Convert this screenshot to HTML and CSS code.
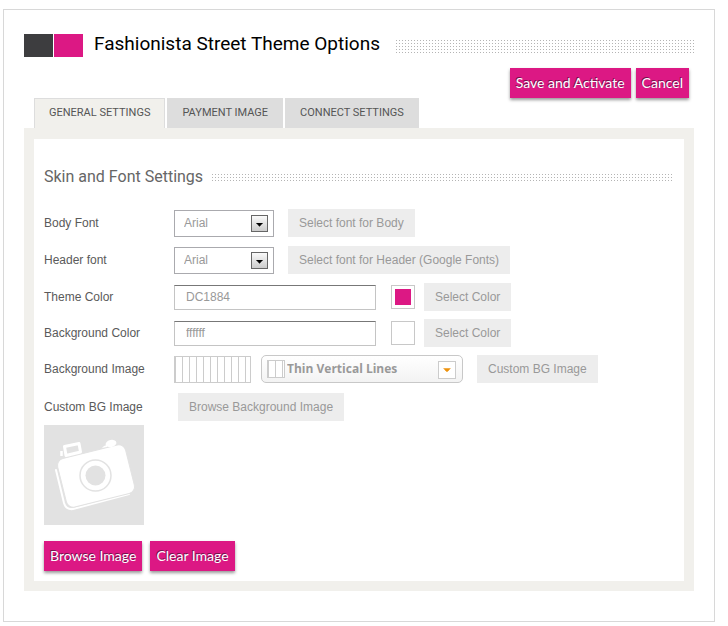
FILE: index.html
```html
<!DOCTYPE html>
<html lang="en">
<head>
<meta charset="utf-8">
<meta name="viewport" content="width=device-width, initial-scale=1">
<title>Fashionista Street Theme Options</title>
<link rel="stylesheet" href="styles.css">
</head>
<body>
<main class="card">
  <header class="title-bar">
    <span class="logo" aria-hidden="true"><span class="logo-dark"></span><span class="logo-pink"></span></span>
    <h1 class="title">Fashionista Street Theme Options</h1>
    <span class="dots dots-large"></span>
  </header>
  <div class="actions">
    <button class="primary" type="button">Save and Activate</button>
    <button class="primary" type="button">Cancel</button>
  </div>
  <nav class="tabs">
    <a class="tab tab-active" href="#general">General Settings</a>
    <a class="tab" href="#payment">Payment Image</a>
    <a class="tab" href="#connect">Connect Settings</a>
  </nav>
  <form class="panel" id="general">
    <div class="section-head">
      <h2 class="section-title">Skin and Font Settings</h2>
      <span class="dots dots-small"></span>
    </div>

    <div class="row row-font">
      <label class="label" for="body-font">Body Font</label>
      <span class="font-select">
        <select id="body-font"><option>Arial</option><option>Verdana</option></select>
        <svg class="select-arrow" viewBox="0 0 17 17" aria-hidden="true"><path d="M5 8h7v1h-1v1h-1v1h-1v1H8v-1H7v-1H6V9H5z"/></svg>
      </span>
      <button class="secondary" type="button">Select font for Body</button>
    </div>
    <div class="row row-font">
      <label class="label" for="header-font">Header font</label>
      <span class="font-select">
        <select id="header-font"><option>Arial</option><option>Verdana</option></select>
        <svg class="select-arrow" viewBox="0 0 17 17" aria-hidden="true"><path d="M5 8h7v1h-1v1h-1v1h-1v1H8v-1H7v-1H6V9H5z"/></svg>
      </span>
      <button class="secondary" type="button">Select font for Header (Google Fonts)</button>
    </div>
    <div class="row row-color">
      <label class="label" for="theme-color">Theme Color</label>
      <input class="text-input" id="theme-color" type="text" value="DC1884">
      <span class="swatch swatch-pink"></span>
      <button class="secondary" type="button">Select Color</button>
    </div>
    <div class="row row-color">
      <label class="label" for="background-color">Background Color</label>
      <input class="text-input" id="background-color" type="text" value="ffffff">
      <span class="swatch"></span>
      <button class="secondary" type="button">Select Color</button>
    </div>
    <div class="row row-pattern">
      <label class="label" for="background-image">Background Image</label>
      <span class="pattern"></span>
      <span class="pattern-select">
        <span class="pattern-thumb"></span>
        <select id="background-image"><option>Thin Vertical Lines</option></select>
        <svg class="pattern-arrow" viewBox="0 0 18 18" aria-hidden="true"><path d="M5 7h8v1h-1v1h-1v1h-1v1H8v-1H7V9H6V8H5z"/></svg>
      </span>
      <button class="secondary" type="button">Custom BG Image</button>
    </div>
    <div class="row row-upload">
      <label class="label" for="custom-image">Custom BG Image</label>
      <button class="secondary" id="custom-image" type="button">Browse Background Image</button>
    </div>

    <svg class="preview" viewBox="0 0 100 100" role="img" aria-label="Camera placeholder">
      <rect width="100" height="100" fill="#e2e2e2"/>
      <path d="M12 45 L20 78 Q22 85 29 84 L85 69" fill="none" stroke="#fff" stroke-width="2" stroke-linecap="round"/>
      <rect x="17" y="26" width="70" height="50" rx="7" fill="#fff" stroke="#e2e2e2" transform="rotate(-14 52 51)"/>
      <path d="M20.500 21.500 35 18.500 36.500 27 22 30.500z" fill="none" stroke="#fff" stroke-width="3" stroke-linejoin="round"/>
      <path d="M17.500 26v5" stroke="#fff" stroke-width="2.500"/>
      <path d="M58 23q2-3 6-3l-1 2z" fill="#fff"/>
      <ellipse cx="67" cy="18.500" rx="5.500" ry="3.500" fill="#fff" transform="rotate(-14 67 18.500)"/>
      <circle cx="51.500" cy="50.500" r="15.500" fill="none" stroke="#e2e2e2" stroke-width="1.500"/>
      <circle cx="51.500" cy="50.500" r="10" fill="#e2e2e2"/>
    </svg>
    <div class="image-actions">
      <button class="primary" type="button">Browse Image</button>
      <button class="primary" type="button">Clear Image</button>
    </div>
  </form>
</main>
</body>
</html>
```

FILE: styles.css
```css
* {
  box-sizing: border-box;
}

body {
  margin: 9px 13px 4px 3px;
  background: #fff;
  color: #5a5a5a;
  font: 12px/16px "Liberation Sans", Arial, sans-serif;
}

button,
input,
select {
  margin: 0;
  font: inherit;
}

.card {
  padding: 24px 20px 30px;
  border: 1px solid #d8d8d8;
  box-shadow: 0 0 4px #ccc;
}

.title-bar {
  display: flex;
  align-items: center;
  height: 23px;
}

.logo {
  display: flex;
  gap: 1px;
}

.logo-dark,
.logo-pink {
  width: 29px;
  height: 23px;
  background: #3d3d3f;
}

.logo-pink {
  background: #dc1884;
}

.title,
.section-title,
.tab,
.primary {
  font-family: Roboto, "Open Sans", sans-serif;
  font-weight: 400;
  white-space: nowrap;
}

.title {
  margin: 0 16px 0 11px;
  color: #000;
  font-size: 19px;
  line-height: 20px;
  padding-bottom: 3px;
}

.dots {
  flex: 1;
  background: conic-gradient(from 270deg at 1px 1px, #b4b4b4 90deg, transparent 0) 0 0 / 3px 3px;
}

.dots-large {
  height: 13px;
  margin-top: 2px;
}

.dots-small {
  height: 7px;
}

.actions,
.image-actions {
  display: flex;
  gap: 5px;
}

.actions {
  justify-content: flex-end;
  padding: 11px 5px 0 0;
}

.primary {
  height: 30px;
  padding: 0 6px;
  border: 0;
  background: #dc1884;
  box-shadow: 0 2px 3px #999;
  color: #fff;
  font-family: Lato, "Open Sans", sans-serif;
  font-size: 14px;
  text-shadow: -1px -1px 0 #72154b;
}

.tabs {
  display: flex;
  gap: 2px;
  padding-left: 10px;
}

.tab {
  height: 30px;
  padding: 0 15px;
  background: #ddd;
  color: #555;
  font-size: 11px;
  line-height: 30px;
  text-decoration: none;
  text-transform: uppercase;
}

.tab-active {
  padding: 0 14px;
  border: 1px solid #ddd;
  border-bottom: 0;
  background: #f1f0ec;
  line-height: 28px;
}

.panel {
  padding: 24px 10px 10px;
  border: 10px solid #f1f0ec;
  border-top-width: 11px;
}

.section-head {
  display: flex;
  align-items: center;
  gap: 9px;
  height: 28px;
  margin-bottom: 18px;
}

.section-title {
  margin: 0;
  color: #666;
  font-size: 16px;
  line-height: 28px;
}

.row {
  display: flex;
  align-items: center;
  height: 28px;
  margin-bottom: 8px;
}

.row-font {
  margin-bottom: 9px;
}

.row-pattern {
  margin-bottom: 10px;
}

.row-upload {
  margin-bottom: 4px;
}

.label {
  width: 130px;
}

.row-upload .label {
  width: 134px;
}

.secondary {
  height: 28px;
  padding: 0 11px;
  border: 0;
  background: #ededed;
  color: #999;
  white-space: nowrap;
}

.font-select,
.pattern-select {
  position: relative;
}

.font-select {
  width: 100px;
  height: 27px;
  margin-right: 14px;
}

select {
  width: 100%;
  height: 100%;
  border: 0;
  background: transparent;
  color: #999;
  appearance: none;
}

.font-select select {
  padding: 0 24px 0 9px;
  border: 1px solid #aaaaae;
}

.select-arrow {
  position: absolute;
  top: 5px;
  right: 6px;
  width: 17px;
  height: 17px;
  border: 1px solid #666;
  background: linear-gradient(#fafafa, #ccc);
  pointer-events: none;
}

.text-input {
  width: 202px;
  height: 25px;
  margin-right: 15px;
  padding: 0 11px;
  border: 1px solid #c4c4c4;
  border-top-color: #777;
  background: #fff;
  color: #999;
}

.swatch {
  width: 24px;
  height: 24px;
  margin-right: 9px;
  padding: 3px;
  border: 1px solid #c8c8c8;
}

.swatch-pink {
  background: #dc1884 content-box;
}

.pattern,
.pattern-thumb {
  border: 1px solid #ccc;
  background: linear-gradient(90deg, #fff 6px, #ccc 6px) 1px 0 / 7px 100%;
}

.pattern {
  width: 77px;
  height: 27px;
  margin-right: 10px;
}

.pattern-select {
  width: 202px;
  height: 28px;
  margin-right: 14px;
  border: 1px solid #c8c8c8;
  border-radius: 5px;
  background: linear-gradient(#fff, #f3f3f3);
}

.pattern-select select {
  padding: 0 26px 2px 25px;
  font: bold 12px "Open Sans", "Trebuchet MS", sans-serif;
}

.pattern-thumb {
  position: absolute;
  top: 4px;
  left: 5px;
  width: 18px;
  height: 18px;
  pointer-events: none;
}

.pattern-arrow {
  position: absolute;
  top: 5px;
  right: 6px;
  width: 18px;
  height: 18px;
  border: 1px solid #ccc;
  background: #fff;
  fill: #ee920c;
  pointer-events: none;
}

.preview {
  display: block;
  width: 100px;
  height: 100px;
  margin-bottom: 16px;
}

.image-actions {
  gap: 8px;
}
```
